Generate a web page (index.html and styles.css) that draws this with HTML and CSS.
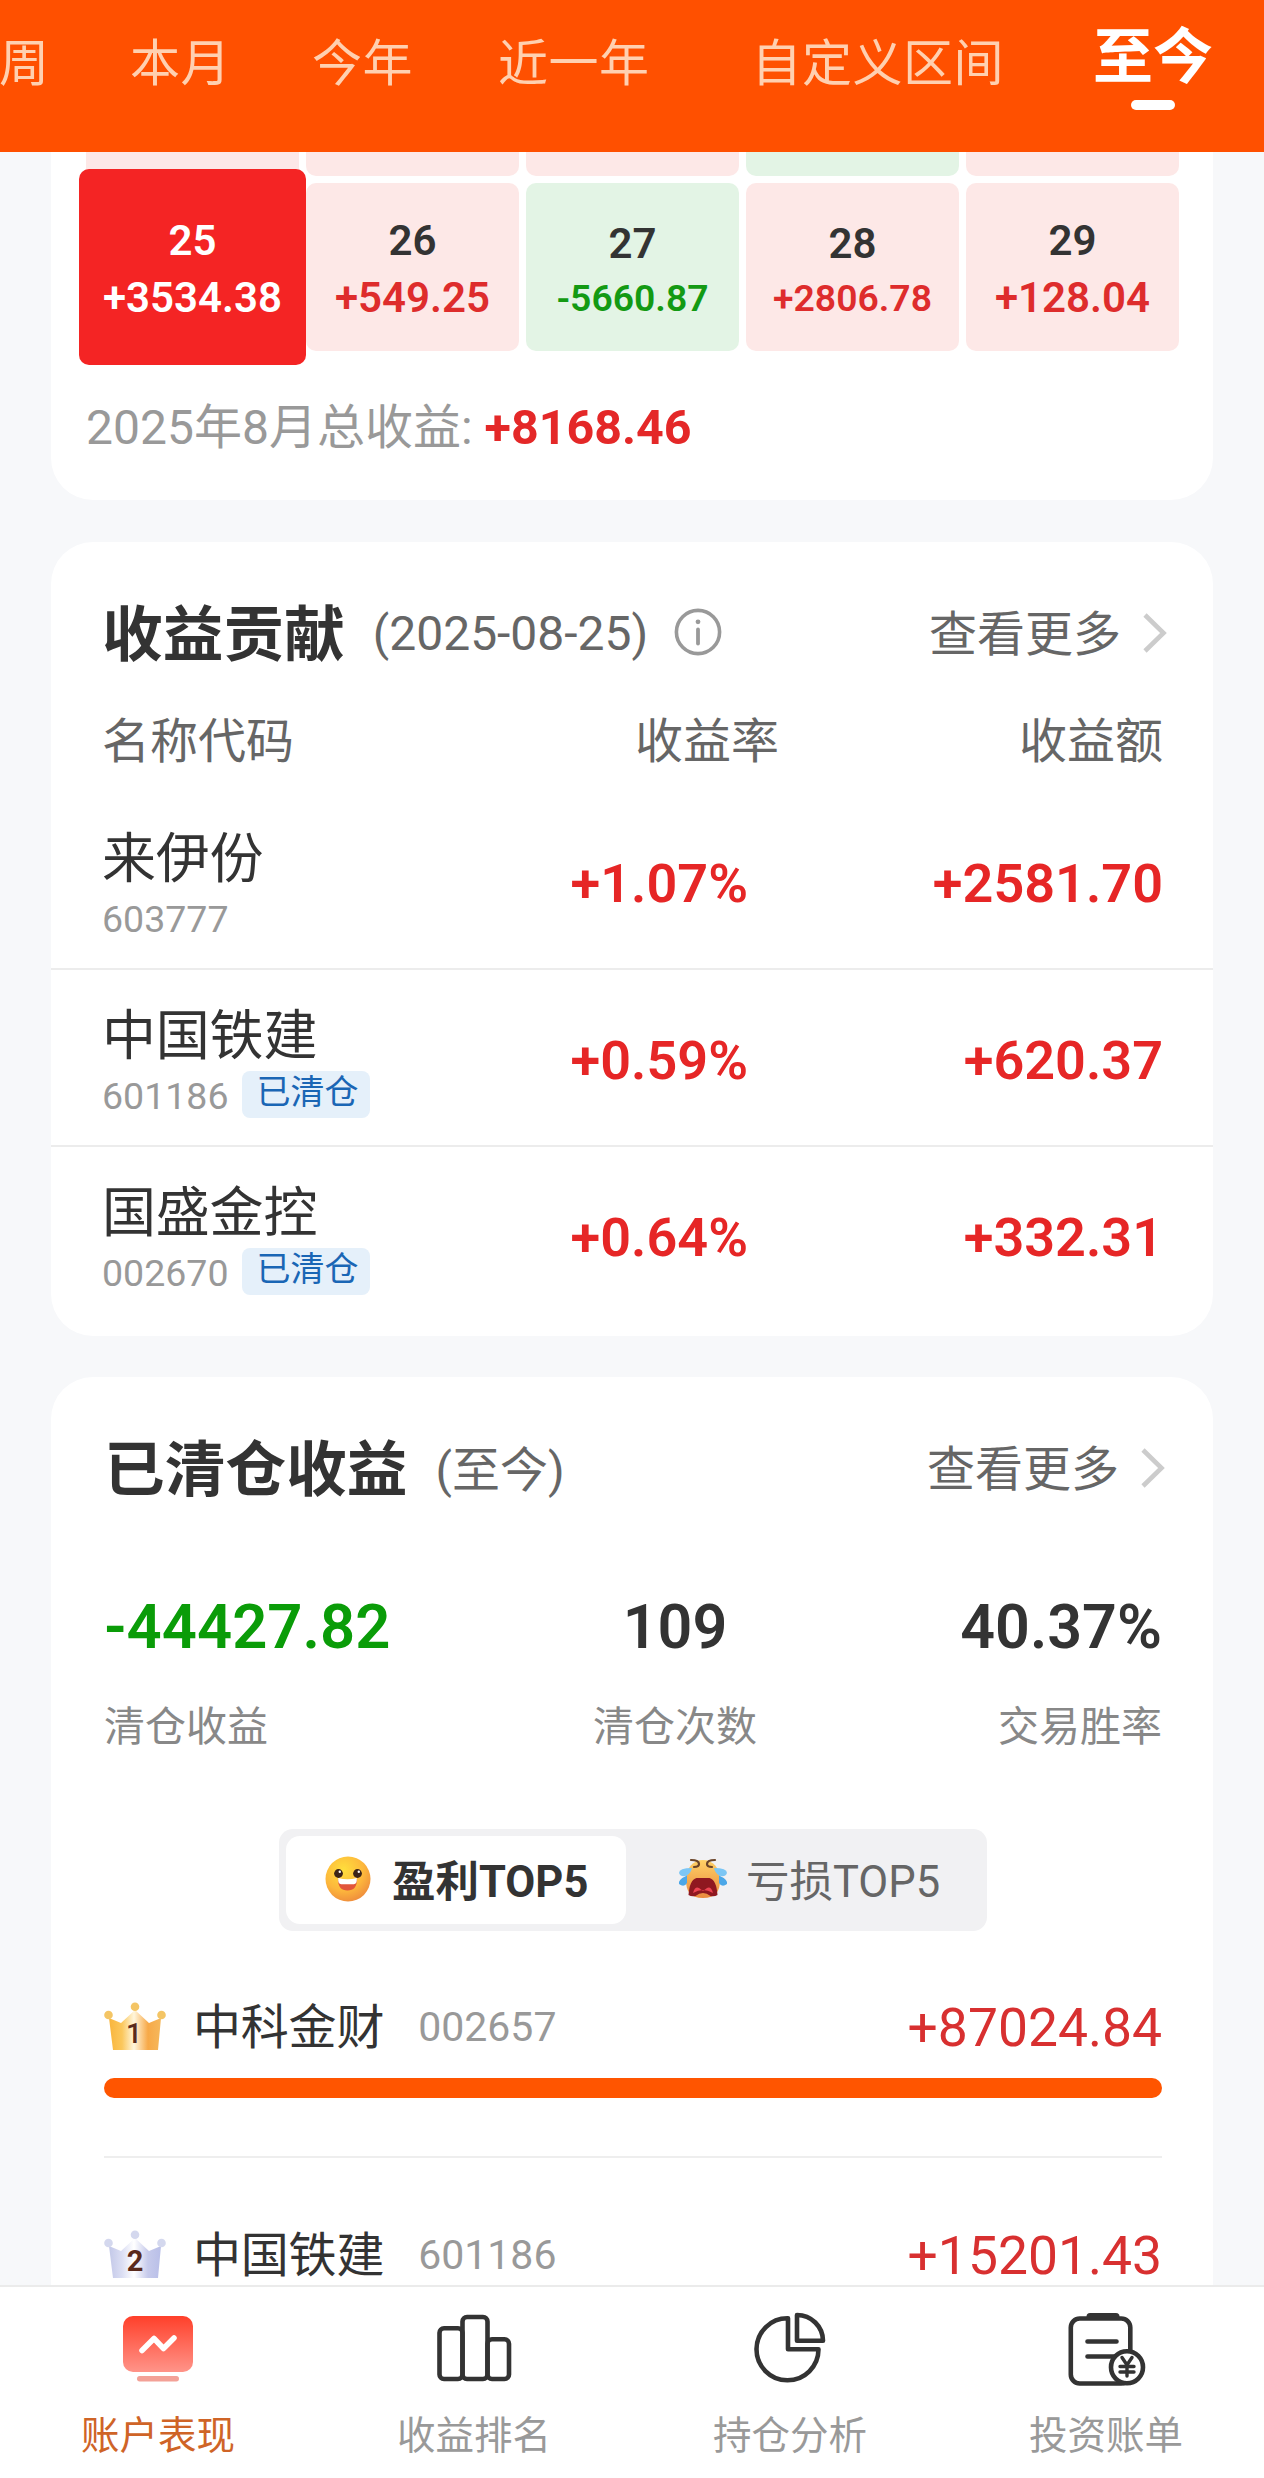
FILE: index.html
```html
<!DOCTYPE html>
<html lang="zh-CN">
<head>
<meta charset="utf-8">
<title>账户表现</title>
<link rel="stylesheet" href="styles.css">
</head>
<body>
<header class="range-tabs">
  <span class="range">周</span>
  <span class="range">本月</span>
  <span class="range">今年</span>
  <span class="range range-year">近一年</span>
  <span class="range range-custom">自定义区间</span>
  <span class="range range-active">至今</span>
</header>

<main class="content">
  <section class="card calendar-card">
    <div class="week week-cut">
      <div class="day up square"></div><div class="day up"></div><div class="day up"></div><div class="day down"></div><div class="day up"></div>
    </div>
    <div class="week">
      <div class="day selected"><span class="date">25</span><span class="amount">+3534.38</span></div>
      <div class="day up"><span class="date">26</span><span class="amount">+549.25</span></div>
      <div class="day down"><span class="date">27</span><span class="amount small">-5660.87</span></div>
      <div class="day up"><span class="date">28</span><span class="amount small">+2806.78</span></div>
      <div class="day up"><span class="date">29</span><span class="amount">+128.04</span></div>
    </div>
    <p class="month-total">2025年8月总收益:<b>+8168.46</b></p>
  </section>

  <section class="card contribution">
    <div class="card-head">
      <h2>收益贡献</h2>
      <span class="sub">(2025-08-25)</span>
      <svg class="info" viewBox="0 0 48 48"><circle cx="24" cy="24" r="21.6" fill="none" stroke="#999" stroke-width="3.6"/><circle cx="24" cy="13.8" r="2.4" fill="#999"/><path d="M24 21.5v14" stroke="#999" stroke-width="3.8" stroke-linecap="round"/></svg>
      <span class="more">查看更多</span>
      <svg class="chevron" viewBox="0 0 24 40"><path d="M2 2l18.5 18L2 38" fill="none" stroke="#ccc" stroke-width="4.6"/></svg>
    </div>
    <div class="columns"><span>名称代码</span><span>收益率</span><span>收益额</span></div>
    <div class="stock">
      <div class="who"><div class="name">来伊份</div><div class="meta"><span class="code">603777</span></div></div>
      <span class="rate">+1.07%</span><span class="gain">+2581.70</span>
    </div>
    <div class="stock">
      <div class="who"><div class="name">中国铁建</div><div class="meta"><span class="code">601186</span><span class="tag">已清仓</span></div></div>
      <span class="rate">+0.59%</span><span class="gain">+620.37</span>
    </div>
    <div class="stock">
      <div class="who"><div class="name">国盛金控</div><div class="meta"><span class="code">002670</span><span class="tag">已清仓</span></div></div>
      <span class="rate">+0.64%</span><span class="gain">+332.31</span>
    </div>
  </section>

  <section class="card cleared">
    <div class="card-head">
      <h2>已清仓收益</h2>
      <span class="sub">(至今)</span>
      <span class="more">查看更多</span>
      <svg class="chevron" viewBox="0 0 24 40"><path d="M2 2l18.5 18L2 38" fill="none" stroke="#ccc" stroke-width="4.6"/></svg>
    </div>
    <div class="stats">
      <div class="stat"><strong class="loss">-44427.82</strong><span>清仓收益</span></div>
      <div class="stat middle"><strong>109</strong><span>清仓次数</span></div>
      <div class="stat right"><strong>40.37%</strong><span>交易胜率</span></div>
    </div>
    <div class="switch">
      <div class="option chosen">
        <svg class="face" viewBox="0 0 48 48">
          <defs><radialGradient id="smile" cx=".4" cy=".3" r=".75"><stop offset="0" stop-color="#ffdf3c"/><stop offset=".6" stop-color="#fdb73c"/><stop offset="1" stop-color="#ee8a3c"/></radialGradient></defs>
          <circle cx="24" cy="24" r="22.5" fill="url(#smile)"/>
          <circle cx="14.5" cy="18.5" r="4.4" fill="#3c2418"/><circle cx="33.5" cy="18.5" r="4.4" fill="#3c2418"/>
          <circle cx="15.8" cy="16.8" r="1.2" fill="#fff"/><circle cx="34.8" cy="16.8" r="1.2" fill="#fff"/>
          <path d="M14 24q9.500 2.500 19 0q0 11.500-9.500 11.500T14 24z" fill="#e2553a"/>
          <path d="M14.200 23q9.300 2.500 18.600 0q.4 6.200-3 6.200H17.200q-3.400 0-3-6.200z" fill="#fff"/>
        </svg>
        <span>盈利TOP5</span>
      </div>
      <div class="option">
        <svg class="face cry" viewBox="0 0 52 48">
          <defs><linearGradient id="sob" x1="0" y1="0" x2="0" y2="1"><stop offset="0" stop-color="#ffd166"/><stop offset="1" stop-color="#ea8a3e"/></linearGradient></defs>
          <path d="M26 5C36 5 43 13 43 25C43 36 39 43 26 43S9 36 9 25C9 13 16 5 26 5z" fill="url(#sob)"/>
          <path d="M11.500 40q1-15 8-17h13q7 2 8 17q-3 2-7 1q-7.500-6-15 0q-4 1-7-1z" fill="#8f1820"/>
          <path d="M16 38q2-7 6-5l4 3l4-3q4-2 6 5q-10-6-20 0z" fill="#ed4452"/>
          <path d="M14 5q8 0 8 4q0 3-5 3M38 5q-8 0-8 4q0 3 5 3" fill="none" stroke="#6a4429" stroke-width="2.200" stroke-linecap="round"/>
          <path d="M15 13Q2 13 2 18q2 5 8 2.500Q14 18 15 13zM37 13q13 0 13 5q-2 5-8 2.500Q38 18 37 13z" fill="#7cc6f4"/>
          <path d="M10 20.500q-9 4-8 8.500q5 4 8-1zM42 20.500q9 4 8 8.500q-5 4-8-1z" fill="#4ba7e8"/>
        </svg>
        <span>亏损TOP5</span>
      </div>
    </div>
    <div class="rank">
      <svg class="crown" viewBox="0 0 62 48">
        <defs><linearGradient id="gold"><stop offset="0" stop-color="#f9b53c"/><stop offset=".25" stop-color="#fbc75c"/><stop offset=".48" stop-color="#fff6dc"/><stop offset=".75" stop-color="#f7a948"/><stop offset="1" stop-color="#f5b85c"/></linearGradient></defs>
        <path d="M5 16l12 5L31 8l14 13l12-5l-3 32H9z" fill="url(#gold)"/>
        <circle cx="4.500" cy="13" r="4.300" fill="#f4c565"/><circle cx="31" cy="4.800" r="4.300" fill="#f4c565"/><circle cx="57.500" cy="13" r="4.300" fill="#f4c565"/>
        <text x="30" y="40.500" class="place place-first">1</text>
      </svg>
      <span class="name">中科金财</span><span class="code">002657</span><span class="gain">+87024.84</span>
    </div>
    <div class="bar"><div class="fill" style="width:100%"></div></div>
    <hr>
    <div class="rank rank-second">
      <svg class="crown" viewBox="0 0 62 48">
        <defs><linearGradient id="silver"><stop offset="0" stop-color="#c3c8e8"/><stop offset=".25" stop-color="#dbdef3"/><stop offset=".48" stop-color="#fff"/><stop offset=".75" stop-color="#c6caeb"/><stop offset="1" stop-color="#b9bfe8"/></linearGradient></defs>
        <path d="M5 16l12 5L31 8l14 13l12-5l-3 32H9z" fill="url(#silver)"/>
        <circle cx="4.500" cy="13" r="4.300" fill="#d4d8ee"/><circle cx="31" cy="4.800" r="4.300" fill="#d4d8ee"/><circle cx="57.500" cy="13" r="4.300" fill="#d4d8ee"/>
        <text x="31" y="40.500" class="place">2</text>
      </svg>
      <span class="name">中国铁建</span><span class="code">601186</span><span class="gain">+15201.43</span>
    </div>
  </section>
</main>

<nav class="bottom-nav">
  <div class="nav-item current">
    <svg viewBox="0 0 80 80">
      <defs><linearGradient id="screen" x1="0" y1="0" x2="0" y2="1"><stop offset="0" stop-color="#ff402a"/><stop offset="1" stop-color="#ff9489"/></linearGradient></defs>
      <rect x="5" y="9" width="70" height="56" rx="10" fill="url(#screen)"/>
      <path d="M24 43.500L36 31.500l9.500 10L56 31" fill="none" stroke="#fff" stroke-width="5.500" stroke-linecap="round" stroke-linejoin="round"/>
      <rect x="19" y="69" width="42" height="5.500" rx="2.700" fill="#f3a197"/>
    </svg>
    <span>账户表现</span>
  </div>
  <div class="nav-item">
    <svg viewBox="0 0 80 80" fill="none" stroke="#333" stroke-width="4.600"><rect x="5.500" y="21.300" width="23" height="50.700" rx="4.500"/><rect x="28.500" y="10" width="25" height="62" rx="4.500"/><rect x="53.500" y="32.300" width="21.500" height="39.700" rx="4.500"/></svg>
    <span>收益排名</span>
  </div>
  <div class="nav-item">
    <svg viewBox="0 0 80 80" fill="none" stroke="#333" stroke-width="4.600" stroke-linejoin="round"><path d="M38 42.300V11.300A31 31 0 1 0 68.500 42.300z"/><path d="M47 33.700V8A26 26 0 0 1 73 33.700z"/></svg>
    <span>持仓分析</span>
  </div>
  <div class="nav-item">
    <svg viewBox="0 0 80 80" fill="none" stroke="#333" stroke-width="4.600" stroke-linecap="round"><rect x="4.800" y="11.500" width="59.500" height="65" rx="9"/><path d="M24 9.500h26" stroke-width="7"/><path d="M21.500 34.500h29M21.500 49.500h32"/><circle cx="61" cy="60.300" r="16" fill="#fff"/><path d="M56 50.500l5 7.500l5-7.500M61 58v11M54 59.500h14M54 65h14" stroke-width="3.400"/></svg>
    <span>投资账单</span>
  </div>
</nav>
</body>
</html>
```
FILE: styles.css
```css
* { box-sizing: border-box; }
body {
  margin: 0;
  width: 1264px;
  height: 2478px;
  overflow: hidden;
  display: flex;
  flex-direction: column;
  background: #f7f8fa;
  color: #333;
  font-family: Roboto, "Noto Sans CJK SC", sans-serif;
}
h2, p { margin: 0; }
svg { display: block; flex: none; }

.range-tabs {
  flex: none;
  height: 152px;
  display: flex;
  align-items: flex-start;
  padding-top: 31px;
  background: #ff5000;
  color: #ffd0b0;
  white-space: nowrap;
}
.range {
  font-size: 50px;
  line-height: 66px;
  letter-spacing: .5px;
  margin-right: 81px;
}
.range:first-child { margin-left: -1px; margin-right: 80.5px; }
.range-year { margin-left: 4px; margin-right: 102px; }
.range-custom { margin-right: 89px; }
.range-active {
  font-size: 60px;
  font-weight: 700;
  letter-spacing: 0;
  color: #fff;
  margin: -6px 0 0;
  display: flex;
  flex-direction: column;
  align-items: center;
}
.range-active::after {
  content: "";
  width: 44px;
  height: 10px;
  margin-top: 9px;
  border-radius: 5px;
  background: #fff;
}

.content { flex: 1; min-height: 0; overflow: hidden; padding: 0 51px; }
.card { background: #fff; border-radius: 42px; }

.calendar-card { height: 348px; border-radius: 0 0 42px 42px; padding: 0 34px 0 35px; }
.week { display: grid; grid-template-columns: repeat(5, 213px); gap: 7px; height: 168px; margin-top: 7px; }
.week-cut { height: 24px; margin-top: 0; }
.week-cut .day { border-radius: 0 0 10px 10px; }
.week-cut .square { border-radius: 0; }
.day {
  border-radius: 10px;
  display: flex;
  flex-direction: column;
  align-items: center;
  justify-content: center;
  padding-top: 6px;
  font-size: 42px;
  line-height: 1.35;
  font-weight: 600;
}
.up { background: #fde8e7; }
.down { background: #e3f4e5; }
.up .amount { color: #de2c2c; }
.down .amount { color: #139a13; }
.amount.small { font-size: 37.3px; }
.selected { background: #f42424; color: #fff; margin: -14px -7px; }
.month-total { margin: 47px 0 0; font-size: 48px; line-height: 60px; color: #999; }
.month-total b { color: #e42828; font-weight: 700; margin-left: 12px; font-size: 48.4px; }

.card-head { display: flex; align-items: center; height: 64px; white-space: nowrap; }
h2 { font-size: 60.7px; line-height: 64px; font-weight: 700; margin-top: 4px; }
.sub { margin-left: 28px; font-size: 48px; color: #666; }
.contribution .sub { margin-top: -2px; }
.cleared .sub { margin-top: -7px; }
.info { width: 48px; height: 48px; margin-left: 26px; margin-top: -4px; }
.more { margin-left: auto; margin-top: -8px; font-size: 48px; color: #666; }
.chevron { width: 24px; height: 40px; margin-left: 22px; margin-top: -3px; }

.contribution { height: 794px; margin-top: 42px; padding-top: 60px; }
.contribution .card-head { padding: 0 46px 0 51px; }
.columns {
  display: grid;
  grid-template-columns: 420px 306px 1fr;
  padding: 0 50px 0 51px;
  margin-top: 43px;
  height: 66px;
  line-height: 66px;
  font-size: 48px;
  color: #666;
}
.columns span:nth-child(2) { padding-left: 113px; }
.columns span:last-child { text-align: right; }
.stock {
  display: grid;
  grid-template-columns: 421px 226px 1fr;
  height: 177px;
  padding: 0 50px 0 51px;
  border-top: 2px solid #ececec;
}
.columns + .stock { border-top-color: transparent; margin-top: 16px; }
.who .name { font-size: 54px; line-height: 60px; margin-top: 37px; letter-spacing: -.2px; }
.meta { display: flex; height: 47px; margin-top: 4px; }
.meta .code { font-size: 37.5px; line-height: 47px; color: #999; margin-top: 2px; }
.tag {
  width: 128px;
  height: 47px;
  margin-left: 14px;
  border-radius: 8px;
  background: #e5f0fa;
  color: #1a66b5;
  font-size: 34px;
  line-height: 43px;
  text-align: center;
  padding-left: 2px;
}
.rate, .stock .gain { font-size: 54px; line-height: 64px; margin-top: 59px; font-weight: 600; color: #e62626; }
.rate, .gain { text-align: right; }
.rate { padding-right: 1px; }

.cleared { height: 1000px; margin-top: 41px; padding: 60px 51px 0 53px; }
.cleared .chevron { margin-right: -3px; }
.stats { display: grid; grid-template-columns: 1fr 1fr 1fr; margin-top: 90px; }
.stat { display: flex; flex-direction: column; }
.stat strong { font-size: 61px; line-height: 72px; font-weight: 600; white-space: nowrap; }
.stat .loss { color: #0a9c08; font-size: 61.6px; }
.stat span { font-size: 41px; line-height: 56px; margin-top: 36px; color: #888; }
.middle { align-items: center; padding-left: 84px; }
.right { align-items: flex-end; }

.switch {
  width: 708px;
  height: 102px;
  margin: 74px auto 0 175px;
  padding: 7px;
  display: flex;
  border-radius: 14px;
  background: #f1f1f3;
}
.option { width: 354px; display: flex; align-items: center; padding-left: 51px; font-size: 43.5px; color: #666; white-space: nowrap; }
.option span { margin-top: -3px; }
.option.chosen { width: 340px; padding-left: 38px; background: #fff; border-radius: 14px; font-weight: 700; color: #333; }
.face { width: 48px; height: 48px; margin-right: 20px; margin-top: -2px; }
.face.cry { width: 52px; margin-right: 17px; }

.rank { display: flex; align-items: center; height: 64px; margin-top: 64px; }
.crown { width: 62px; height: 48px; margin-top: -3px; }
.place { font-size: 29px; font-weight: 700; text-anchor: middle; fill: #5a2a1c; }
.place-first { font-weight: 500; font-size: 28px; }
.rank .name { font-size: 48px; line-height: 50px; margin-left: 27px; margin-top: 1px; letter-spacing: -.2px; }
.rank .code { font-size: 41px; margin-left: 34px; color: #999; }
.rank .gain { margin-left: auto; font-size: 53.4px; color: #d83030; }
.bar { height: 20px; margin-top: 19px; }
.fill { height: 20px; border-radius: 10px; background: #ff5500; }
hr { margin: 58px 0 0; border: 0; height: 2px; background: #eee; }
.rank-second { margin-top: 65px; }

.bottom-nav {
  flex: none;
  height: 193px;
  display: grid;
  grid-template-columns: repeat(4, 1fr);
  background: #fff;
  border-top: 2px solid #ebebeb;
}
.nav-item { display: flex; flex-direction: column; align-items: center; padding-top: 20px; }
.nav-item svg { width: 80px; height: 80px; }
.nav-item span { font-size: 38.5px; line-height: 50px; margin-top: 24px; color: #999; }
.nav-item.current span { color: #cf6427; }
```
